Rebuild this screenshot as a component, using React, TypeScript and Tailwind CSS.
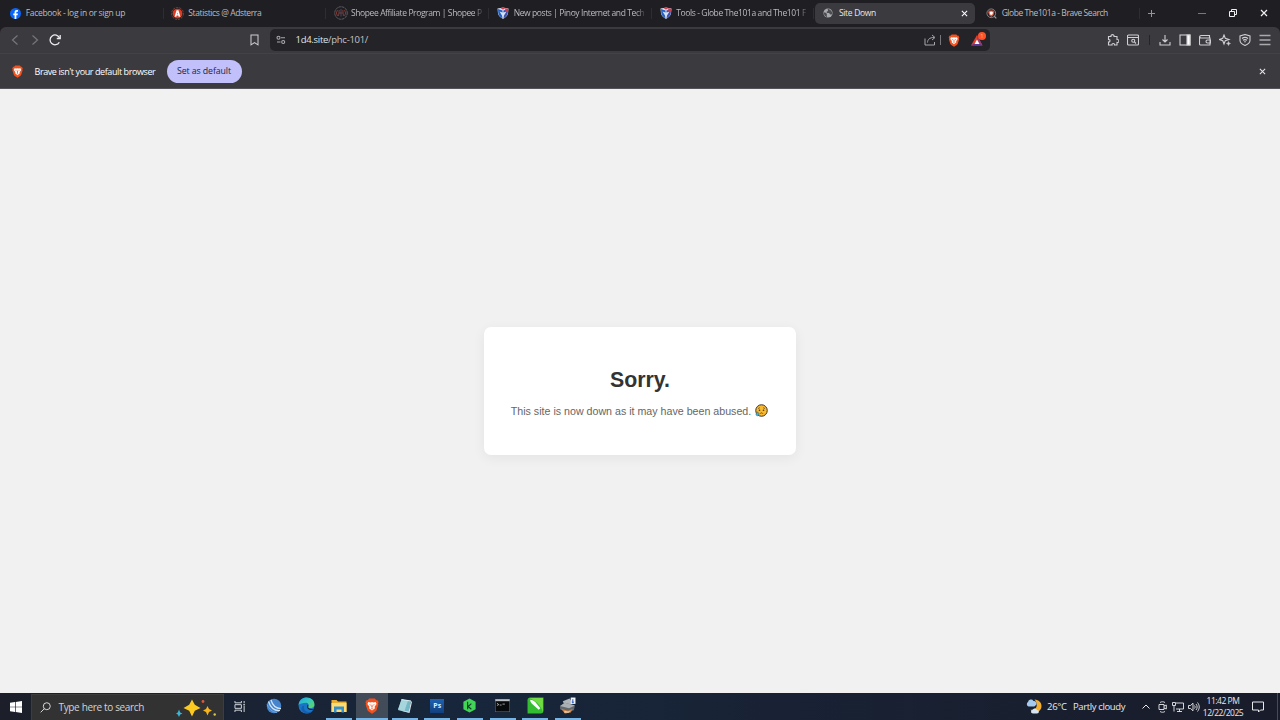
import React from 'react';
import { clsx } from 'clsx';

type IconProps = {
  className?: string;
};

type TabInfo = {
  title: string;
  icon: React.ReactNode;
  titleClass: string;
  isActive?: boolean;
  isFaded?: boolean;
};

type TaskbarApp = {
  name: string;
  icon: React.ReactNode;
  isRunning?: boolean;
  isActive?: boolean;
};

const BraveIcon = ({ className }: IconProps) => (
  <svg viewBox="0 0 24 28" className={className}>
    <path
      d="M7 1h10l2.500 2.800 1.600-.4L23.500 7l-1 2.500.6 2-3 9.500c-.5 1.300-1.400 2.100-3 3.200L12 27.500l-5.100-3.300C5.300 23.100 4.400 22.300 3.900 21L.9 11.500l.6-2L.5 7l2.400-3.600 1.600.4L7 1Z"
      fill="#f4511e"
    />
    <path
      d="m5.500 7 4 .7L12 7l2.500.7 4-.7 1.500 3.700-3.500 4.800.7 2.500-5.200 4-5.200-4 .7-2.500L4 10.700 5.500 7Z"
      fill="#fff"
    />
    <path
      d="m7 11 3 .8-.8 1.700L7 11Zm10 0-3 .8.8 1.700L17 11Zm-5.700 1h1.400l.4 4-1.100 1-1.100-1 .4-4ZM10 19l2-1 2 1-2 1-2-1Z"
      fill="#f4511e"
    />
  </svg>
);

const FacebookIcon = () => (
  <svg viewBox="0 0 24 24" className="size-[11px]">
    <circle cx="12" cy="12" r="12" fill="#0866ff" />
    <path
      d="M10 23.800v-8H7.200V12H10V9.900c0-3.500 1.800-5.300 4.900-5.300.9 0 1.800.1 2.500.3v3.300h-1.700c-1.500 0-1.900.7-1.900 2V12h3.500l-.7 3.800h-2.800v8a12 12 0 0 1-3.800 0Z"
      fill="#fff"
    />
  </svg>
);

const AdsterraIcon = () => (
  <svg viewBox="0 0 24 24" className="size-[13px]">
    <circle cx="12" cy="12" r="11" fill="none" stroke="#8d5049" strokeWidth="1.500" strokeDasharray="4 2" />
    <circle cx="12" cy="12" r="9" fill="#df3c25" />
    <path d="M10.200 6h3.600l3.600 12h-3.300l-.5-2.200h-3.200L9.900 18H6.600l3.600-12Zm1.800 4-.9 3.500h1.800L12 10Z" fill="#fff" />
  </svg>
);

const ShopeeTabIcon = () => (
  <svg viewBox="0 0 28 28" className="size-[14px]" fill="none">
    <circle cx="14" cy="14" r="12.500" stroke="#77747b" strokeWidth="1.500" strokeDasharray="5 1.500" />
    <path d="M7 8a9.500 9.500 0 0 0 0 12M21 8a9.500 9.500 0 0 1 0 12" stroke="#873b35" strokeWidth="1.800" />
    <path d="m9 20 1.500-12M19 20 17.500 8M10 14h8" stroke="#87423f" strokeWidth="1.600" />
    <path d="M14 6v15" stroke="#4f4a68" strokeWidth="1.800" />
  </svg>
);

const PinoyIcon = () => (
  <svg viewBox="0 0 24 24" className="size-3">
    <path d="M1 3 7 2l5-1 5 1 6 1-1 10c-.5 4-5 8-10 11C7 21 2.500 17 2 13L1 3Z" fill="#d6e1f1" />
    <path d="m2 4 9 3v4L5 9l5 8 1 6C6 20 3 16 2.500 12L2 4Z" fill="#2360c5" />
    <path d="m22 4-9 3v4l6-2-5 8-1 6c5-3 8-7 8.500-11L22 4Z" fill="#3a4fae" />
    <path d="m7 3 5-1.500L17 3l-5 2-5-2Z" fill="#d13b47" />
    <path d="m16 2.500 6.500 1-.5 7-5-2-1-6Z" fill="#d23b4b" />
  </svg>
);

const GlobeIcon = () => (
  <svg viewBox="0 0 24 24" className="size-[10px]">
    <circle cx="12" cy="12" r="11" fill="#a8aaae" />
    <path
      d="M2 11c4 0 6 1 7 3s-1 3 1 8C5 21 2 17 2 11ZM12 1.500c-2 3 1 3 0 5s-4 1-3 4 5 0 7 3 3 3 6 1c1-5-3-11-10-13Z"
      fill="#4b4b50"
    />
  </svg>
);

const BraveSearchIcon = () => (
  <svg viewBox="0 0 24 24" className="size-[11px]" fill="none">
    <circle cx="11.500" cy="11.500" r="9.500" stroke="#a5a0a5" strokeWidth="1.600" />
    <path d="m18 18 4.500 4.500" stroke="#a5a0a5" strokeWidth="2.500" />
    <path d="M7 5.500h9l2.300 3-2 7-4.800 4L7 15.500l-2.300-7 2.300-3Z" fill="#ef5130" />
    <path d="m8 8.500 3.500-1 3.500 1-.5 5-3 2-3-2-.5-5Z" fill="#fff" />
  </svg>
);

const TABS: TabInfo[] = [
  { title: 'Facebook - log in or sign up', icon: <FacebookIcon />, titleClass: 'tracking-[-0.31px]' },
  { title: 'Statistics @ Adsterra', icon: <AdsterraIcon />, titleClass: 'tracking-[-0.39px]' },
  { title: 'Shopee Affiliate Program | Shopee P', icon: <ShopeeTabIcon />, titleClass: 'tracking-[-0.4px]', isFaded: true },
  { title: 'New posts | Pinoy Internet and Tech', icon: <PinoyIcon />, titleClass: 'tracking-[-0.4px]', isFaded: true },
  { title: 'Tools - Globe The101a and The101 F', icon: <PinoyIcon />, titleClass: 'tracking-[-0.4px]', isFaded: true },
  { title: 'Site Down', icon: <GlobeIcon />, titleClass: 'tracking-[-0.33px]', isActive: true },
  { title: 'Globe The101a - Brave Search', icon: <BraveSearchIcon />, titleClass: 'tracking-[-0.44px]' },
];

const CloseIcon = ({ className }: IconProps) => (
  <svg viewBox="0 0 8 8" className={className} fill="none" stroke="currentColor" strokeWidth="1.200">
    <path d="m1 1 6 6M7 1 1 7" />
  </svg>
);

const Tab = ({ title, icon, titleClass, isActive, isFaded }: TabInfo) => (
  <div className="flex h-full w-[162.67px] shrink-0 items-center">
    <div
      className={clsx(
        'flex h-[21px] w-[160px] items-center rounded-[5px] pl-[6.500px]',
        isActive && 'bg-[#3b3a3f]',
      )}
    >
      <div className="flex w-[14px] shrink-0 items-center justify-center">{icon}</div>
      <span
        className={clsx(
          'ml-[3.500px] text-[8.500px] leading-3 font-medium whitespace-nowrap',
          titleClass,
          isActive ? 'flex-1 text-[#e6e6e8]' : 'text-[#bcbcc0]',
          isFaded && 'mask-r-from-94% mask-r-to-102%',
        )}
      >
        {title}
      </span>
      {isActive && <CloseIcon className="mr-[7px] size-[7px] text-white" />}
    </div>
    {!isActive && <div className="ml-px h-[11px] w-px bg-[#2d2d33]" />}
  </div>
);

const TabStrip = () => (
  <div className="flex h-[27px] items-center bg-[#1f1f23] pb-px pl-[1.700px]">
    {TABS.map((tab) => (
      <Tab key={tab.title} {...tab} />
    ))}
    <svg viewBox="0 0 9 9" className="ml-[7px] size-[9px]" stroke="#949499">
      <path d="M4.500 1v7M1 4.500h7" />
    </svg>
    <div className="ml-auto flex items-center gap-[23px] pr-[12px] text-[#f0f0f1]">
      <div className="h-px w-2 bg-[#77777c]" />
      <svg viewBox="0 0 8 8" className="size-2" fill="none" stroke="currentColor">
        <path d="M.5 2.500h5v5h-5zM2.500 2V.5h5v5H6" />
      </svg>
      <CloseIcon className="size-2" />
    </div>
  </div>
);

const Toolbar = () => (
  <div className="bg-[#1f1f23]">
    <div className="flex h-[27px] items-center rounded-t-[6px] border-b border-[#434247] bg-[#3b3a3f] text-[#d0d0d3]">
      <div className="flex w-[249px] items-center pl-[11px]">
        <svg viewBox="0 0 8 12" className="h-3 w-2" fill="none" stroke="#77767b" strokeWidth="1.200">
          <path d="m6.500 1.500-5 4.500 5 4.500" />
        </svg>
        <svg viewBox="0 0 8 12" className="ml-3 h-3 w-2" fill="none" stroke="#77767b" strokeWidth="1.200">
          <path d="m1.500 1.500 5 4.500-5 4.500" />
        </svg>
        <svg viewBox="0 0 12 12" className="ml-[10px] size-[12px]" fill="none" stroke="#ededee" strokeWidth="1.300">
          <path d="M10.300 8.200A4.900 4.900 0 1 1 10.500 4" />
          <path d="M11.200 1v3.500H7.800" />
        </svg>
      </div>
      <svg viewBox="0 0 10 13" className="h-3 w-[11px]" fill="none" stroke="#d0d0d3" strokeWidth="1.100">
        <path d="M1.200 1h7.600v10.800L5 9.300l-3.800 2.500V1Z" />
      </svg>
      <div className="ml-[10px] flex h-[22px] w-[720px] items-center rounded-[5px] bg-[#242328] pl-[6px]">
        <svg viewBox="0 0 10 10" className="size-[10px]" fill="none" stroke="#a9a9ad" strokeWidth="1.100">
          <circle cx="2.500" cy="2.800" r="1.500" />
          <circle cx="7.200" cy="7" r="1.500" />
          <path d="M5 2.800h4M1 7h3.500" />
        </svg>
        <span className="ml-[9.500px] pt-px text-[9.500px] tracking-[-0.28px] text-[#c4c4c8]">
          <span className="text-[#e2e2e4]">1d4.site</span>/phc-101/
        </span>
        <svg viewBox="0 0 12 12" className="ml-auto size-3" fill="none" stroke="#a6a6aa">
          <path d="M1 4.500V11h9.500V8M3.500 8.500c.2-3 2-5 6.500-5M8 1l3 2.500L8 6" />
        </svg>
        <div className="ml-[4px] h-[10px] w-px bg-[#77767b]" />
        <BraveIcon className="ml-[7px] h-[13px] w-[12px]" />
        <div className="relative mr-[4px] ml-[11px] h-4 w-[15px]">
          <svg viewBox="0 0 15 16" className="h-4 w-[15px]">
            <path d="m6 3 5.500 10.500H0L6 3Z" fill="#e13e2b" />
            <path d="M0 13.500 6 9.500l5.500 4H0Z" fill="#5b3794" />
            <path d="m6 3 5.500 10.500L6 9.500V3Z" fill="#963e76" />
            <path d="m6 7.500 2.500 4.500h-5L6 7.500Z" fill="#fff" />
          </svg>
          <span className="absolute top-0 right-0 size-[8px] rounded-full bg-[#ff5129] text-center text-[5px] leading-[8px] text-[#ffc4b5]">
            1
          </span>
        </div>
      </div>
      <div className="ml-auto flex items-center pr-[9px] [&>svg]:size-3">
        <svg viewBox="0 0 24 24" fill="none" stroke="currentColor" strokeWidth="2.200">
          <path d="M3 5h5c-1-5 7-5 6 0h6v6c5-1 5 7 0 6v5h-5c1-4-6-4-5 0H3v-6c4 1 4-6 0-5V5Z" />
        </svg>
        <svg viewBox="0 0 24 24" className="ml-2" fill="none" stroke="currentColor" strokeWidth="2.200">
          <rect x="1" y="2" width="22" height="20" rx="2" />
          <path d="M1 7h22M15 16l3 3" />
          <circle cx="12.500" cy="13.500" r="3" />
        </svg>
        <div className="mr-[9px] ml-[10px] h-[10px] w-px bg-[#25242a]" />
        <svg viewBox="0 0 24 24" fill="none" stroke="currentColor" strokeWidth="2.200">
          <path d="M12 2v14M7 11l5 5 5-5M2 16v6h20v-6" />
        </svg>
        <svg viewBox="0 0 24 24" className="ml-2" fill="none" stroke="currentColor" strokeWidth="2.200">
          <rect x="2" y="2" width="20" height="20" />
          <path d="M16 2h6v20h-6z" fill="#fff" />
        </svg>
        <svg viewBox="0 0 24 24" className="ml-2" fill="none" stroke="currentColor" strokeWidth="2.200">
          <path d="M21 8V3H4a2.500 2.500 0 0 0 0 5h18v14H3c-1 0-2-1-2-2V5M23 12h-6c-4 0-4 6 0 6h6v-6Z" />
        </svg>
        <svg viewBox="0 0 24 24" className="ml-2" fill="none" stroke="currentColor" strokeWidth="2.200">
          <path d="m10 2 2.500 6.500L20 11l-7.500 2.500L10 20l-2.500-6.500L1 11l6.500-2.500L10 2Z" />
          <path
            d="m19 15 1.200 2.800L23 19l-2.800 1.200L19 23l-1.200-2.800L15 19l2.800-1.200L19 15Z"
            fill="currentColor"
            strokeWidth="1"
          />
        </svg>
        <svg viewBox="0 0 24 24" className="ml-2" fill="none" stroke="currentColor" strokeWidth="2.200">
          <path d="M12 1 22 4v9c0 4-5 8-10 10C7 21 2 17 2 13V4l10-3Z" />
          <path d="M6 9c4-3 8-3 12 0M8 12.500c3-2 5-2 8 0M10.500 16c1-.7 2-.7 3 0" />
        </svg>
        <svg viewBox="0 0 24 24" className="ml-2" stroke="#aaaaad" strokeWidth="3.400">
          <path d="M1 3h22M1 12h22M1 21h22" />
        </svg>
      </div>
    </div>
  </div>
);

const DefaultBrowserBar = () => (
  <div className="flex h-[35px] items-center border-b border-[#55545a] bg-[#3b3a3f] pl-[12px]">
    <BraveIcon className="h-[13px] w-[11px]" />
    <span className="ml-[11.500px] w-[122px] pt-px text-[9px] tracking-[-0.41px] whitespace-nowrap text-white">
      Brave isn&apos;t your default browser
    </span>
    <button className="ml-[10px] h-[23px] w-[75px] rounded-full bg-[#c1c0fa] pt-px text-[8.800px] tracking-[-0.1px] whitespace-nowrap text-[#1f1e42]">
      Set as default
    </button>
    <CloseIcon className="mr-[14px] ml-auto size-[7px] text-[#e5e5e7]" />
  </div>
);

const SadFace = () => (
  <svg viewBox="0 0 26 26" className="size-[13px]">
    <circle cx="13" cy="13" r="11.500" fill="#fbb92c" stroke="#3d3327" strokeWidth="2" />
    <path d="m6.500 9 3-1.500M19.500 9l-3-1.500M10 19.500c1.500-2.500 4.500-2.500 6 0" fill="none" stroke="#3d3327" strokeWidth="1.500" />
    <circle cx="9" cy="12.500" r="1.600" fill="#3d3327" />
    <circle cx="17" cy="12.500" r="1.600" fill="#3d3327" />
    <path d="M5 15.500c2 2.500 2.800 3.500 2.800 5A2.900 2.900 0 0 1 5 23.500c-1.800 0-3-1.300-3-3s1-2.500 3-5Z" fill="#36b2df" stroke="#285568" />
  </svg>
);

const SiteDown = () => (
  <main className="flex min-h-0 flex-1 items-center justify-center bg-[#f1f1f1] font-['Liberation_Sans',Arial,sans-serif]">
    <div className="flex h-[128px] w-[312px] flex-col items-center rounded-[7px] bg-white pt-[39px] shadow-[0_3px_13px_rgba(0,0,0,0.06)]">
      <h1 className="text-[21.330px] leading-7 font-bold text-[#333]">Sorry.</h1>
      <p className="mt-[9.500px] mr-px flex items-center text-[10.670px] leading-[14px] whitespace-nowrap text-[#666]">
        This site is now down as it may have been abused.
        <span className="ml-[4px]">
          <SadFace />
        </span>
      </p>
    </div>
  </main>
);

const TASKBAR_APPS: TaskbarApp[] = [
  {
    name: 'thunderbird',
    icon: (
      <svg viewBox="0 0 32 32" className="size-4">
        <circle cx="16" cy="16" r="14.500" fill="#4684cd" />
        <path d="M5 7c4 12 12 19 23 18M10 4c3 11 9 17 20 17" fill="none" stroke="#d3e6f7" strokeWidth="2.500" />
        <path d="M2 13c4 9 10 15 20 16" fill="none" stroke="#6ea5df" strokeWidth="2" />
      </svg>
    ),
  },
  {
    name: 'edge',
    icon: (
      <svg viewBox="0 0 32 32" className="size-[17px]">
        <defs>
          <linearGradient id="edge" x1="0" y1="0" x2="1" y2="1">
            <stop stopColor="#209edc" />
            <stop offset=".45" stopColor="#35c8c1" />
            <stop offset="1" stopColor="#67d652" />
          </linearGradient>
        </defs>
        <circle cx="16" cy="16" r="15" fill="#1976c7" />
        <path d="M1 15C2 5 9 1 16 1c9 0 15 6 15 13 0 5-4 7-9 7-3 0-4-2-3-3 3-3 0-7-4-7-6 0-12 2-14 4Z" fill="url(#edge)" />
        <path d="M12 16c-3 5 1 13 9 12 3 0 5-1 7-3-5 9-18 7-21 0-2-6 2-9 5-9Z" fill="#145fae" />
        <path d="M18 14c2 2 2 3 1 5 1 4 8 5 12 2v2c-6 3-17 1-13-9Z" fill="#17263a" />
      </svg>
    ),
  },
  {
    name: 'explorer',
    isRunning: true,
    icon: (
      <svg viewBox="0 0 32 28" className="h-[14px] w-4">
        <path d="M1 2h10l3 3h17v21H1V2Z" fill="#e9ad32" />
        <path d="M1 8h30v18H1z" fill="#ffdc72" />
        <path d="M6 15h20v12h-5v-6H11v6H6V15Z" fill="#338fcd" />
      </svg>
    ),
  },
  { name: 'brave', isRunning: true, isActive: true, icon: <BraveIcon className="h-4 w-[14px]" /> },
  {
    name: 'notepad',
    isRunning: true,
    icon: (
      <svg viewBox="0 0 32 32" className="size-4">
        <path d="m9 3 19 3-5 23-21-5L9 3Z" fill="#75b8c8" />
        <path d="m9 3 13 2-7 21-13-3L9 3Z" fill="#a6d5dc" />
        <path d="m28 6 2 2-5 22-23-6 21 3 5-21Z" fill="#d4dfe2" />
        <path d="m9 3 19 3" stroke="#d9eef2" strokeWidth="2" />
      </svg>
    ),
  },
  {
    name: 'photoshop',
    isRunning: true,
    icon: (
      <span className="flex size-[14px] items-center justify-center bg-linear-to-b from-[#1f62b2] to-[#123f80] text-[7px] leading-none font-bold text-[#d7efff]">
        Ps
      </span>
    ),
  },
  {
    name: 'kinemaster',
    isRunning: true,
    icon: (
      <svg viewBox="0 0 32 32" className="size-[15px]">
        <path d="m16 1 13 7v16l-13 7-13-7V8l13-7Z" fill="#41d456" />
        <path d="M12 8v16M20 12l-7 6 7 6" fill="none" stroke="#173e2a" strokeWidth="2.500" />
      </svg>
    ),
  },
  {
    name: 'terminal',
    isRunning: true,
    icon: (
      <svg viewBox="0 0 32 28" className="h-[13px] w-[15px]">
        <path d="M0 0h32v28H0z" fill="#777b80" />
        <path d="M1 5h30v22H1z" fill="#07090b" />
        <path d="M1 1h30v3H1z" fill="#c8cacc" />
        <path d="m4 9 4 3-4 2M10 13h4M16 11h5" fill="none" stroke="#ddd" strokeWidth="1.500" />
      </svg>
    ),
  },
  {
    name: 'corel',
    isRunning: true,
    icon: (
      <svg viewBox="0 0 32 32" className="size-[17px]">
        <path d="M6 1h25v25c0 3-2 5-5 5H1V6c0-3 2-5 5-5Z" fill="#35bd32" />
        <path d="M4 2h26v26c-5-13-12-20-26-26Z" fill="#70db42" />
        <path d="M6 5c4 0 7 2 10 5l9 11-3 3L12 15C8 12 6 9 6 5Z" fill="#fff" />
      </svg>
    ),
  },
  {
    name: 'printer',
    isRunning: true,
    icon: (
      <svg viewBox="0 0 32 32" className="size-[17px]">
        <path d="m7 8 13-5 6 9-14 6L7 8Z" fill="#aeb4b8" />
        <path d="m2 17 9-6 19 5-2 9-11 4-15-6v-6Z" fill="#62686c" />
        <path d="m2 17 9-6 19 5-11 5-17-4Z" fill="#a9afb2" />
        <path d="m4 22 13 4 9-4-4 7-11 2-7-9Z" fill="#cf7f3e" />
        <path d="m10 26 7 1.500 5-2-4 4h-8V26Z" fill="#d8cdb8" />
        <path d="M22 1h9v12h-9z" fill="#f1f5fa" />
        <path d="M25 4h2v5h2l-3 3-3-3h2V4Z" fill="#315fbd" />
      </svg>
    ),
  },
];

const SearchSparkles = () => (
  <svg viewBox="0 0 40 18" className="ml-auto h-[18px] w-10">
    <path d="m16 .5 2.800 5.200L24.500 9l-5.700 2.800L16 17.500l-2.800-5.700L7.500 9l5.700-3.300L16 .5Z" fill="#fbc91f" />
    <path d="m31.500 7 1.500 3 3 1.500-3 1.500-1.500 3.500-1.500-3.500-3-1.500 3-1.500 1.500-3Z" fill="#f7b51d" />
    <path d="m3 10.500 1.200 3 2.300 1-2.300 1-1.200 2.500-1.200-2.500-2-1 2-1L3 10.500Z" fill="#39b6d6" />
    <circle cx="27" cy="2.500" r="1.400" fill="#dd593b" />
    <circle cx="38.700" cy="15.500" r="1.200" fill="#d9c938" />
  </svg>
);

const Taskbar = () => (
  <div className="flex h-[27px] items-center bg-linear-to-r from-[#1c1f29] via-[#17263b] via-35% to-[#191c2a] text-[#e8e9eb]">
    <div className="flex w-[31px] justify-center">
      <svg viewBox="0 0 12 12" className="size-3" fill="#fff">
        <path d="m0 1.700 5-.7v4.700H0zM5.700.9 12 0v5.700H5.700zM0 6.300h5V11l-5-.7zM5.700 6.300H12V12l-6.300-.9z" />
      </svg>
    </div>
    <div className="flex h-[26px] w-[193px] items-center self-end border border-b-0 border-[#3d3d40] bg-[#323233] pr-[7px] pl-[8px]">
      <svg viewBox="0 0 12 12" className="size-[11px]" fill="none" stroke="#e5e5e6">
        <circle cx="7.400" cy="4.600" r="3.800" />
        <path d="M4.700 7.300.7 11.300" />
      </svg>
      <span className="ml-[7.500px] text-[10px] tracking-[-0.34px] whitespace-nowrap text-[#d2d2d3]">
        Type here to search
      </span>
      <SearchSparkles />
    </div>
    <div className="flex w-[33.700px] justify-center">
      <svg viewBox="0 0 13 12" className="mr-px h-[11px] w-3" fill="none" stroke="#dfe3e7">
        <path d="M1 0v2h7V0M1 12v-2h7v2M1 4h7v4H1zM11 0v2.500M11 5v7M10 4h2" />
      </svg>
    </div>
    {TASKBAR_APPS.map(({ name, icon, isRunning, isActive }) => (
      <div
        key={name}
        className={clsx(
          'flex h-full w-[32.670px] shrink-0 flex-col items-center',
          isActive && 'bg-[#424c59]',
        )}
      >
        <div className="flex h-[25px] items-center">{icon}</div>
        {isRunning && (
          <div className={clsx('h-[2px] bg-[#75b4e4]', isActive ? 'w-full' : 'w-[26px]')} />
        )}
      </div>
    ))}
    <div className="ml-auto flex h-full items-center text-[9.500px]">
      <svg viewBox="0 0 32 30" className="h-[15px] w-4">
        <path d="M17 1c9 1 14 6 14 13 0 8-6 13-14 13-4 0-7-3-8-6 12 3 17-10 8-20Z" fill="#f4ae31" />
        <path d="M5 15a5 5 0 0 1-1-9 6 6 0 0 1 11-2 5 5 0 0 1 4 9c-1 1-2 2-4 2H5Z" fill="#a4caee" />
        <path d="M14 29c-5 0-5-6-1-7 2-4 7-4 9 0 5 0 5 7 0 7h-8Z" fill="#d6e5f4" />
      </svg>
      <span className="ml-[5px] w-[26px] pt-[2px] tracking-[-0.3px] whitespace-nowrap">26°C</span>
      <span className="w-[53px] pt-[2px] tracking-[-0.38px] whitespace-nowrap">Partly cloudy</span>
      <svg viewBox="0 0 8 5" className="ml-[16px] h-[5px] w-2" fill="none" stroke="currentColor">
        <path d="m.5 4.500 3.500-3.500 3.500 3.500" />
      </svg>
      <svg viewBox="0 0 9 12" className="ml-[8px] h-3 w-[9px]" fill="none" stroke="currentColor" strokeWidth=".9">
        <path d="M2 1.500c1.500-1 3.500-1 5 0M2 10.500c1.500 1 3.500 1 5 0M1 3.500h5v5H1zM6 5l2.300-1v4L6 7" />
      </svg>
      <svg viewBox="0 0 12 12" className="ml-[5px] h-3 w-3" fill="none" stroke="currentColor" strokeWidth=".9">
        <path d="M4 2h7.500v6H4M7.500 8v2.500M5 10.500h5M.5 1.500h3v3h-3zM2 4.500v6" />
      </svg>
      <svg viewBox="0 0 12 12" className="ml-[4px] h-3 w-3" fill="none" stroke="currentColor" strokeWidth=".9">
        <path d="M.5 4.500h2L5 2.200v7.600L2.500 7.500h-2zM6.500 4.500c.8 1 .8 2 0 3M8 3c1.500 2 1.500 4 0 6M9.500 1.500c2.300 3 2.300 6 0 9" />
      </svg>
      <div className="ml-[2px] flex w-[42px] flex-col items-center text-[8.500px] leading-3 tracking-[-0.47px] whitespace-nowrap">
        <span>11:42 PM</span>
        <span>12/22/2025</span>
      </div>
      <svg viewBox="0 0 12 12" className="ml-[8px] size-3" fill="none" stroke="currentColor">
        <path d="M.5 1h11v8h-3L6.500 11V9h-6V1Z" />
      </svg>
      <div className="mr-[2px] ml-[13px] h-full w-px bg-[#484b57]" />
    </div>
  </div>
);

export default function App() {
  return (
    <div className="flex h-[720px] w-[1280px] flex-col overflow-hidden font-['Open_Sans','Noto_Sans',sans-serif]">
      <TabStrip />
      <Toolbar />
      <DefaultBrowserBar />
      <SiteDown />
      <Taskbar />
    </div>
  );
}
